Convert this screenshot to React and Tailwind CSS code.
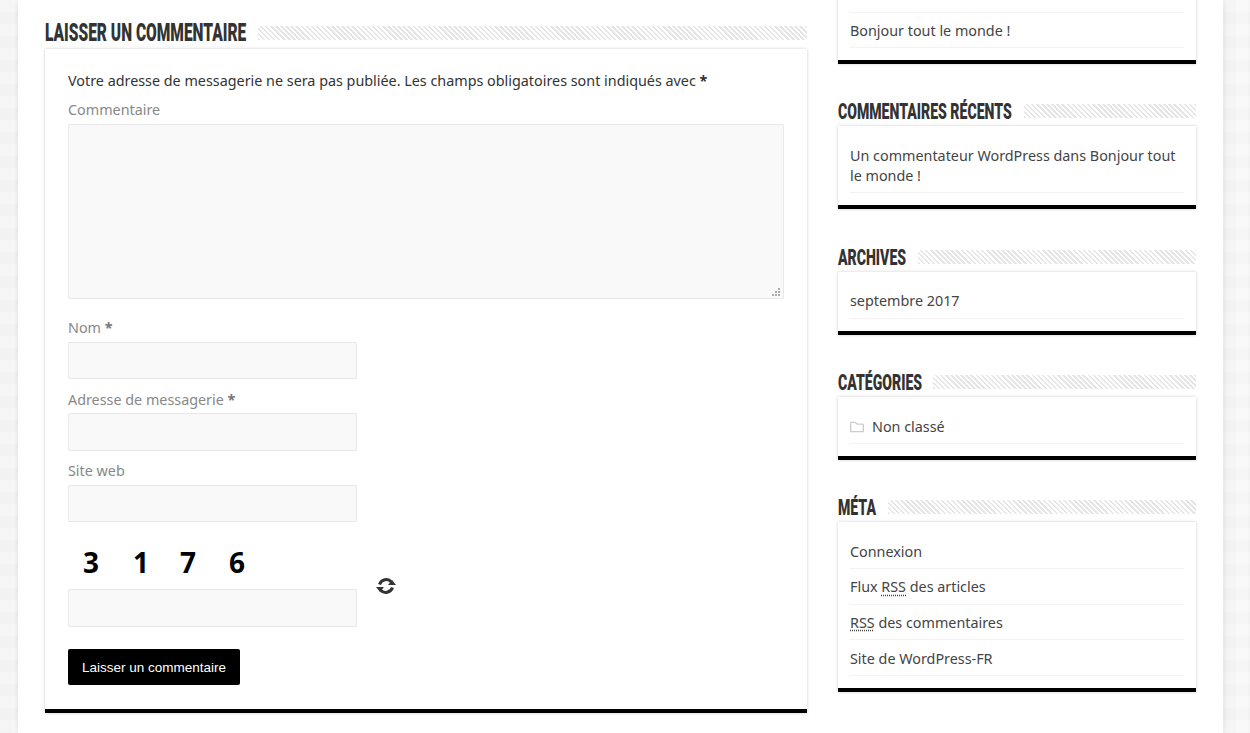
import React from "react";
import { FaRegFolder } from "react-icons/fa";

const Stripes = () => (
  <div className="h-[14px] flex-1 bg-[repeating-linear-gradient(45deg,#e6e6e6_0,#e6e6e6_1.8px,#ffffff_1.8px,#ffffff_3.6px)]" />
);

const Heading = ({ children, big, width }) => (
  <div className={big ? "flex h-[28px] items-center gap-3 mb-[2px]" : "flex h-[24px] items-center gap-3 mb-[3px]"}>
    <div className={"h-full overflow-visible " + width}>
      <h2
        className={
          "origin-left whitespace-nowrap font-['Roboto','Liberation_Sans',sans-serif] font-black uppercase text-[#333] " +
          (big ? "text-[26.5px] leading-[26px] scale-x-[0.585]" : "text-[22.5px] leading-[24px] scale-x-[0.625]")
        }
      >
        {children}
      </h2>
    </div>
    <Stripes />
  </div>
);

const Row = ({ children }) => (
  <div className="border-b border-[#f2f2f2] pt-[8.5px] pb-[5.5px] leading-[20.6px] text-[#444]">{children}</div>
);

const Card = ({ children }) => (
  <div className="bg-white px-3 pt-[11px] pb-3 border-b-4 border-black shadow-[0_0_3px_rgba(0,0,0,0.2)]">{children}</div>
);

const Abbr = ({ children }) => (
  <span className="underline decoration-dotted decoration-[#444] underline-offset-2">{children}</span>
);

const Field = ({ className }) => (
  <div className={"w-[289px] rounded-[2px] border border-[#e8e8e8] bg-[#f9f9f9] " + className} />
);

const Label = ({ children, className }) => (
  <div className={"leading-[21px] text-[#888] " + (className || "")}>{children}</div>
);

const Star = () => <span className="font-bold text-[#777]">*</span>;

export default function App() {
  return (
    <div className="h-[733px] w-[1250px] overflow-hidden bg-[#f9f9f9] bg-[linear-gradient(90deg,rgba(232,232,232,0.25)_50%,transparent_50%),linear-gradient(0deg,rgba(232,232,232,0.25)_50%,transparent_50%)] bg-[length:24px_24px] font-['Noto_Sans','Open_Sans',sans-serif] text-[14.35px]">
      <div className="ml-[18px] flex h-[733px] w-[1205px] bg-white pl-[27px] shadow-[0_0_6px_rgba(0,0,0,0.12)]">
        <div className="w-[762px] shrink-0 pt-[19px]">
          <Heading big width="w-[201px]">Laisser un commentaire</Heading>
          <div className="border-b-4 border-black bg-white px-[23px] pb-[24px] pt-[21px] shadow-[0_0_3px_rgba(0,0,0,0.2)]">
            <p className="leading-[21px] text-[#333]">
              Votre adresse de messagerie ne sera pas publiée. Les champs obligatoires sont indiqués avec <b className="text-[#333]">*</b>
            </p>
            <Label className="mt-2">Commentaire</Label>
            <div className="relative mt-[4px] h-[175px] w-[716px] rounded-[2px] border border-[#e8e8e8] bg-[#f9f9f9]">
              <svg className="absolute bottom-[2px] right-[3px]" width="8" height="8" viewBox="0 0 8 8" fill="#aaa">
                <rect x="6" y="0" width="2" height="2" />
                <rect x="3" y="3" width="2" height="2" />
                <rect x="6" y="3" width="2" height="2" />
                <rect x="0" y="6" width="2" height="2" />
                <rect x="3" y="6" width="2" height="2" />
                <rect x="6" y="6" width="2" height="2" />
              </svg>
            </div>
            <Label className="mt-[18px]">Nom <Star /></Label>
            <Field className="mt-[4px] h-[37px]" />
            <Label className="mt-[10px]">Adresse de messagerie <Star /></Label>
            <Field className="mt-[3px] h-[38px]" />
            <Label className="mt-[9px]">Site web</Label>
            <Field className="mt-[4px] h-[37px]" />
            <div className="mt-[22px] flex items-center">
              <div>
                <div className="flex h-[45px] items-center pb-[10px] pl-[15px] font-['Open_Sans','Noto_Sans',sans-serif] text-[28px] font-bold leading-none text-black">
                  <span className="w-[49px]">3</span>
                  <span className="w-[47px] pl-[1px]">1</span>
                  <span className="w-[49px] pl-[1px]">7</span>
                  <span className="pl-[1px]">6</span>
                </div>
                <Field className="h-[38px]" />
              </div>
              <svg className="ml-[19px] mb-[-1px]" width="20" height="20" viewBox="0 0 20 20" fill="none" stroke="#333" strokeWidth="3">
                <path d="M3.5 8.5A7 7 0 0 1 15.5 6" />
                <path d="M16.5 11.5A7 7 0 0 1 4.5 14" />
                <path d="M12 9h8l-4-5z" fill="#333" stroke="none" />
                <path d="M8 11H0l4 5z" fill="#333" stroke="none" />
              </svg>
            </div>
            <div className="mt-[22px] flex h-[36px] w-[172px] items-center justify-center rounded-[2px] bg-black pt-[2px] font-['Liberation_Sans',sans-serif] text-[13.5px] text-white">
              Laisser un commentaire
            </div>
          </div>
        </div>

        <div className="ml-[31px] w-[358px] shrink-0 -mt-[34px]">
          <Card>
            <Row>&nbsp;</Row>
            <Row>Bonjour tout le monde !</Row>
          </Card>
          <div className="mt-[35px]">
            <Heading width="w-[174px]">Commentaires récents</Heading>
            <Card>
              <Row>Un commentateur WordPress dans Bonjour tout le monde !</Row>
            </Card>
          </div>
          <div className="mt-[35.6px]">
            <Heading width="w-[68px]">Archives</Heading>
            <Card>
              <Row>septembre 2017</Row>
            </Card>
          </div>
          <div className="mt-[35.6px]">
            <Heading width="w-[83px]">Catégories</Heading>
            <Card>
              <Row>
                <span className="flex items-center">
                  <FaRegFolder className="mr-2 text-[14px] text-[#ccc]" />
                  Non classé
                </span>
              </Row>
            </Card>
          </div>
          <div className="mt-[35.6px]">
            <Heading width="w-[38px]">Méta</Heading>
            <Card>
              <Row>Connexion</Row>
              <Row>Flux <Abbr>RSS</Abbr> des articles</Row>
              <Row><Abbr>RSS</Abbr> des commentaires</Row>
              <Row>Site de WordPress-FR</Row>
            </Card>
          </div>
        </div>
      </div>
    </div>
  );
}
